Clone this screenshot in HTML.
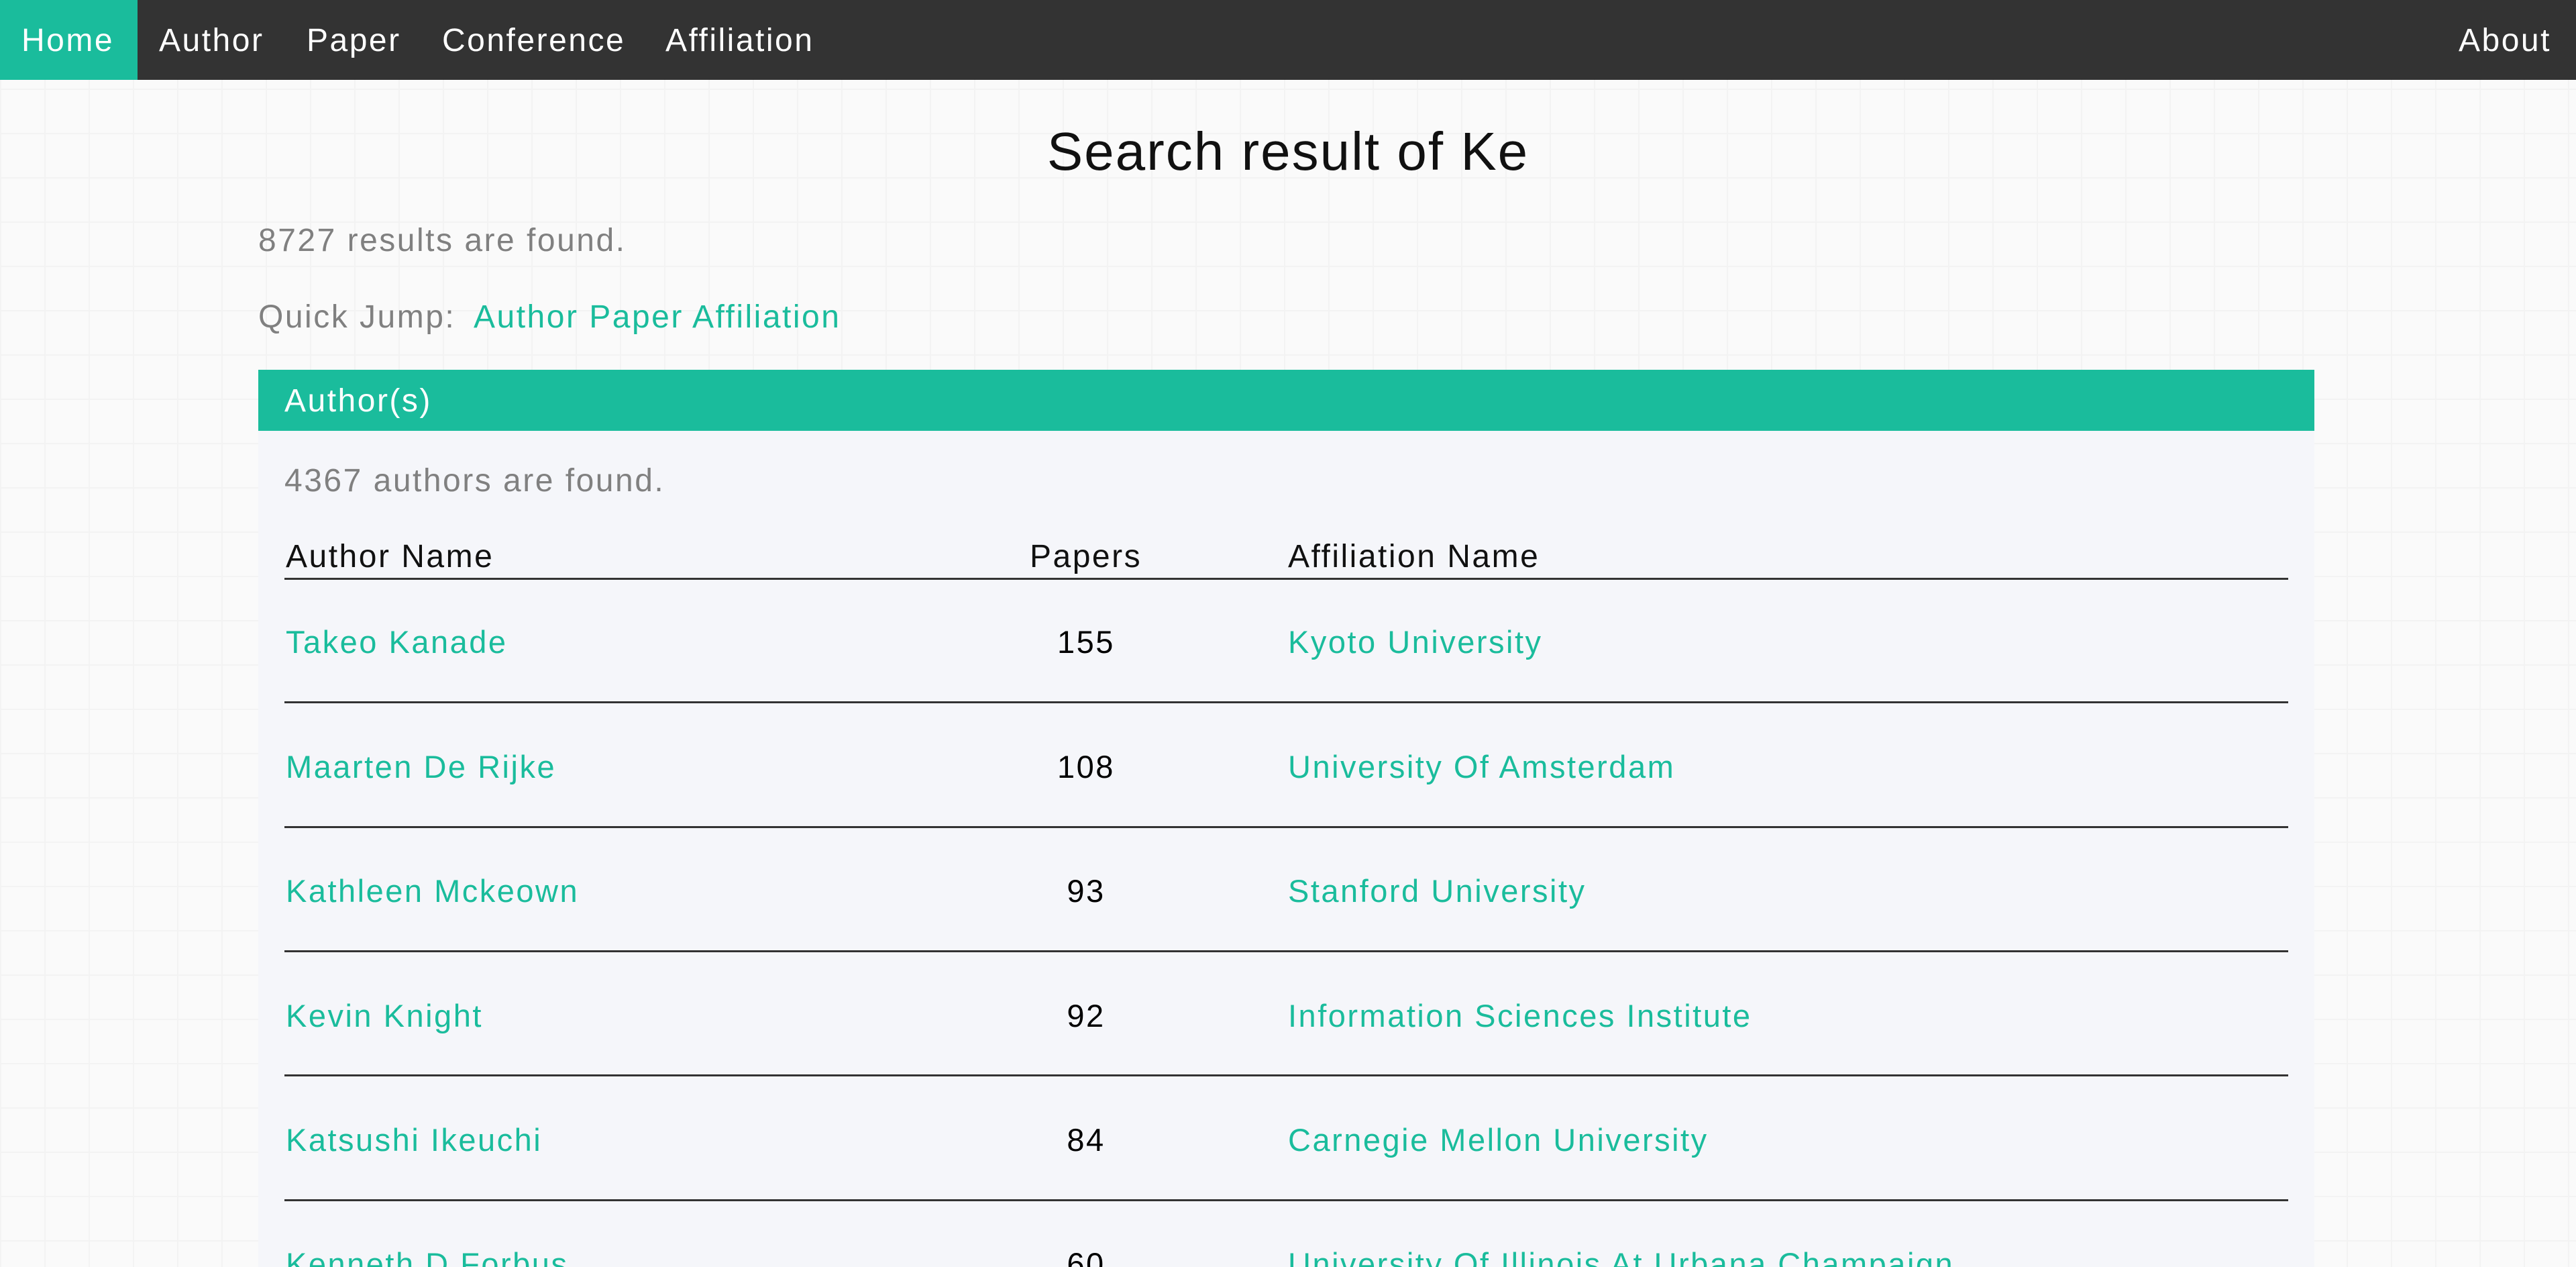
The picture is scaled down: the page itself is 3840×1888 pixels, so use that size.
<!DOCTYPE html>
<html><head><meta charset="utf-8"><style>
*{margin:0;padding:0;box-sizing:border-box}
html{width:3840px;height:1888px;overflow:hidden}
body{width:3840px;height:1888px;overflow:hidden;background:#fafafa;font-family:"Liberation Sans",sans-serif;position:relative;letter-spacing:2.5px;
background-image:linear-gradient(#f3f3f3 2px,transparent 2px),linear-gradient(90deg,#f3f3f3 2px,transparent 2px);background-size:66px 66px}
.a{position:absolute;white-space:nowrap;line-height:1}
nav{position:absolute;left:0;top:0;width:3840px;height:119px;background:#333}
.home{position:absolute;left:0;top:0;width:205px;height:119px;background:#1abc9c}
.nv{color:#fff;font-size:48px;top:37px}
.g{color:#1abc9c}
.gr{color:#808080}
.panel{position:absolute;left:385px;top:642px;width:3065px;height:1246px;background:#f5f6fa}
.hdr{position:absolute;left:385px;top:551px;width:3065px;height:91px;background:#1abc9c}
.ln{position:absolute;left:424px;width:2987px;height:3px;background:#333}
.r{font-size:47px}
</style></head><body>
<nav><div class="home"></div>
<div class="a nv" style="left:32px">Home</div>
<div class="a nv" style="left:237px">Author</div>
<div class="a nv" style="left:457px">Paper</div>
<div class="a nv" style="left:659px">Conference</div>
<div class="a nv" style="left:992px">Affiliation</div>
<div class="a nv" style="left:3665px">About</div>
</nav>
<div class="a" style="left:0;width:3840px;text-align:center;top:186px;font-size:80px;color:#111;letter-spacing:2px">Search result of Ke</div>
<div class="a gr" style="left:385px;top:335px;font-size:48px">8727 results are found.</div>
<div class="a gr" style="left:385px;top:449px;font-size:48px">Quick Jump:</div>
<div class="a g" style="left:706px;top:449px;font-size:48px">Author Paper Affiliation</div>
<div class="panel"></div>
<div class="hdr"></div>
<div class="a" style="left:424px;top:574px;font-size:48px;color:#fff">Author(s)</div>
<div class="a gr" style="left:424px;top:693px;font-size:48px">4367 authors are found.</div>
<div class="a" style="left:426px;top:806px;font-size:48px;color:#111">Author Name</div>
<div class="a" style="left:1535px;top:806px;font-size:48px;color:#111">Papers</div>
<div class="a" style="left:1920px;top:806px;font-size:48px;color:#111">Affiliation Name</div>
<div class="ln" style="top:861px"></div>

<div class="a r g" style="left:426px;top:933px">Takeo Kanade</div>
<div class="a r" style="left:1519px;width:200px;text-align:center;top:933px">155</div>
<div class="a r g" style="left:1920px;top:933px">Kyoto University</div>
<div class="ln" style="top:1045px"></div>

<div class="a r g" style="left:426px;top:1119px">Maarten De Rijke</div>
<div class="a r" style="left:1519px;width:200px;text-align:center;top:1119px">108</div>
<div class="a r g" style="left:1920px;top:1119px">University Of Amsterdam</div>
<div class="ln" style="top:1231px"></div>

<div class="a r g" style="left:426px;top:1304px">Kathleen Mckeown</div>
<div class="a r" style="left:1519px;width:200px;text-align:center;top:1304px">93</div>
<div class="a r g" style="left:1920px;top:1304px">Stanford University</div>
<div class="ln" style="top:1416px"></div>

<div class="a r g" style="left:426px;top:1490px">Kevin Knight</div>
<div class="a r" style="left:1519px;width:200px;text-align:center;top:1490px">92</div>
<div class="a r g" style="left:1920px;top:1490px">Information Sciences Institute</div>
<div class="ln" style="top:1601px"></div>

<div class="a r g" style="left:426px;top:1675px">Katsushi Ikeuchi</div>
<div class="a r" style="left:1519px;width:200px;text-align:center;top:1675px">84</div>
<div class="a r g" style="left:1920px;top:1675px">Carnegie Mellon University</div>
<div class="ln" style="top:1787px"></div>

<div class="a r g" style="left:426px;top:1860px">Kenneth D Forbus</div>
<div class="a r" style="left:1519px;width:200px;text-align:center;top:1860px">60</div>
<div class="a r g" style="left:1920px;top:1860px">University Of Illinois At Urbana Champaign</div>
</body></html>
